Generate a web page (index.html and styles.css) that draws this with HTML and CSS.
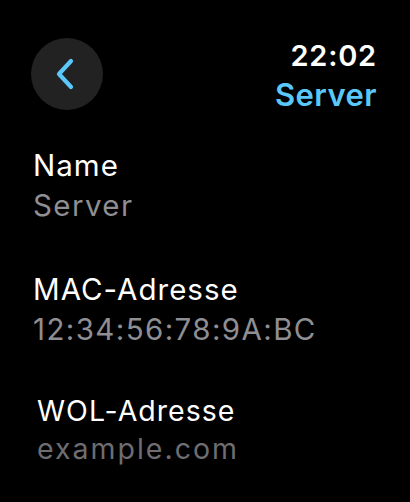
FILE: index.html
```html
<!DOCTYPE html>
<html>
<head>
<meta charset="utf-8">
<link rel="stylesheet" href="styles.css">
</head>
<body>
<div class="screen">
  <header class="header">
    <div class="back">
      <svg width="18" height="32" viewBox="0 0 18 32"><path d="M15 3 L3 16 L15 29" fill="none" stroke="#5ac8fa" stroke-width="4.2" stroke-linecap="round" stroke-linejoin="round"/></svg>
    </div>
    <div class="titles">
      <div class="time">22:02</div>
      <div class="title">Server</div>
    </div>
  </header>
  <div class="list">
    <div class="item">
      <div class="label">Name</div>
      <div class="value">Server</div>
    </div>
    <div class="item">
      <div class="label">MAC-Adresse</div>
      <div class="value">12:34:56:78:9A:BC</div>
    </div>
    <div class="item item-scaled">
      <div class="label">WOL-Adresse</div>
      <div class="value value-dim">example.com</div>
    </div>
  </div>
</div>
</body>
</html>
```
FILE: styles.css
```css
html, body {
  margin: 0;
  padding: 0;
  background: #000;
}
.screen {
  width: 410px;
  height: 502px;
  overflow: hidden;
  font-family: "Inter", "Roboto", sans-serif;
  color: #fff;
  box-sizing: border-box;
  padding: 36px 33px 0 31px;
}
.header {
  display: flex;
  justify-content: space-between;
  align-items: flex-start;
}
.back {
  width: 72px;
  height: 72px;
  margin-top: 2px;
  border-radius: 50%;
  background: #222222;
  display: flex;
  align-items: center;
  justify-content: center;
}
.back svg {
  margin-left: -5px;
}
.titles {
  display: flex;
  flex-direction: column;
  align-items: flex-end;
}
.time {
  font-size: 29px;
  font-weight: 600;
  line-height: 39px;
  letter-spacing: 0.8px;
}
.title {
  font-size: 31px;
  font-weight: 600;
  line-height: 39px;
  letter-spacing: 0.4px;
  color: #5ac8fa;
}
.list {
  display: flex;
  flex-direction: column;
  gap: 44px;
  padding-left: 2px;
  margin-top: 31px;
}
.label {
  font-size: 29.5px;
  line-height: 40px;
  letter-spacing: 1px;
}
.value {
  font-size: 29.5px;
  line-height: 40px;
  letter-spacing: 1.4px;
  color: #8e8e93;
}
.item-scaled {
  padding-left: 4px;
  margin-top: -1px;
}
.item-scaled .label,
.item-scaled .value {
  font-size: 28.5px;
  line-height: 38px;
}
.item-scaled .value {
  letter-spacing: 2px;
}
.value-dim {
  color: #6d6d72;
}
```
